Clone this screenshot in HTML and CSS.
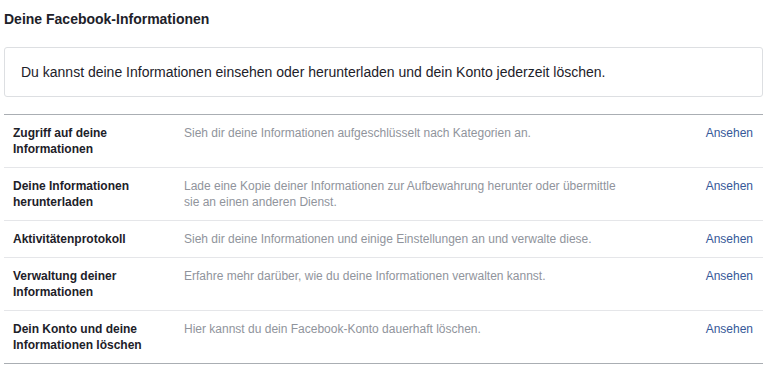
FILE: index.html
```html
<!DOCTYPE html>
<html lang="de">

<head>
    <meta charset="UTF-8">
    <title>Deine Facebook-Informationen</title>
    <link rel="stylesheet" href="styles.css">
</head>

<body>
    <div class="page">
        <h2 class="page-title">Deine Facebook-Informationen</h2>

        <!-- Intro box -->
        <div class="intro">
            Du kannst deine Informationen einsehen oder herunterladen und dein Konto jederzeit löschen.
        </div>

        <!-- Settings list -->
        <ul class="settings">
            <li class="row">
                <span class="row-title">Zugriff auf deine Informationen</span>
                <span class="row-desc">Sieh dir deine Informationen aufgeschlüsselt nach Kategorien an.</span>
                <a class="row-link" href="#">Ansehen</a>
            </li>
            <li class="row">
                <span class="row-title">Deine Informationen herunterladen</span>
                <span class="row-desc">Lade eine Kopie deiner Informationen zur Aufbewahrung herunter oder übermittle sie an einen anderen Dienst.</span>
                <a class="row-link" href="#">Ansehen</a>
            </li>
            <li class="row">
                <span class="row-title">Aktivitätenprotokoll</span>
                <span class="row-desc">Sieh dir deine Informationen und einige Einstellungen an und verwalte diese.</span>
                <a class="row-link" href="#">Ansehen</a>
            </li>
            <li class="row">
                <span class="row-title">Verwaltung deiner Informationen</span>
                <span class="row-desc">Erfahre mehr darüber, wie du deine Informationen verwalten kannst.</span>
                <a class="row-link" href="#">Ansehen</a>
            </li>
            <li class="row">
                <span class="row-title">Dein Konto und deine Informationen löschen</span>
                <span class="row-desc">Hier kannst du dein Facebook-Konto dauerhaft löschen.</span>
                <a class="row-link" href="#">Ansehen</a>
            </li>
        </ul>
    </div>
</body>

</html>
```

FILE: styles.css
```css
/* General Styles */
body {
    margin: 0;
    font-family: 'Liberation Sans', Arial, sans-serif;
    background: #fff;
    color: #1d2129;
}

.page {
    width: 759px;
    padding: 10px 0 0 4px;
}

.page-title {
    font-size: 14px;
    font-weight: bold;
    line-height: 18px;
    margin: 0 0 19px;
}

/* Intro Box */
.intro {
    border: 1px solid #dddfe2;
    border-radius: 3px;
    padding: 15px 16px 15px;
    font-size: 14px;
    line-height: 18px;
    color: #1d2129;
    margin-bottom: 17px;
}

/* Settings List */
.settings {
    list-style: none;
    margin: 0;
    padding: 0;
    border-top: 1px solid #aaaeb3;
    border-bottom: 1px solid #aaaeb3;
}

.row {
    display: grid;
    grid-template-columns: 171px 450px 1fr;
    padding: 10px 10px 10px 9px;
    font-size: 12px;
    line-height: 16px;
    border-top: 1px solid #e5e6e9;
}

.row:first-child {
    border-top: none;
}

.row-title {
    font-weight: bold;
    padding-right: 11px;
    color: #1d2129;
}

.row-desc {
    color: #90949c;
}

.row-link {
    text-align: right;
    color: #365899;
    text-decoration: none;
}
```
